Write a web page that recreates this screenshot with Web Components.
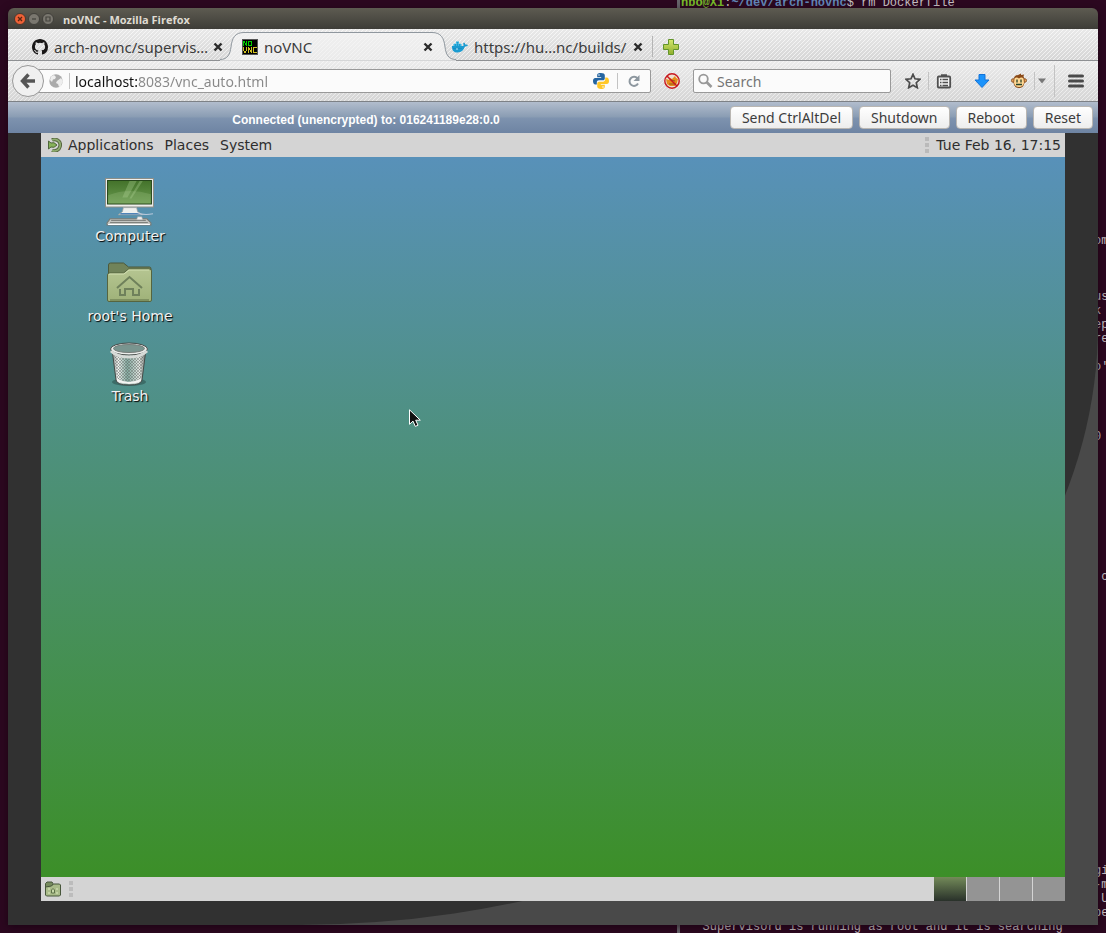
<!DOCTYPE html>
<html lang="en">
<head>
<meta charset="utf-8">
<title>noVNC - Mozilla Firefox</title>
<style>
  html, body { margin: 0; }
  body {
    background: #2c0820;
    font: 14px/20px "Noto Sans", "Open Sans", sans-serif;
    color: #3c3c3c;
  }
</style>
</head>
<body>
<user-desktop>
  <terminal-pane slot="behind"></terminal-pane>
  <browser-window>
    <title-bar slot="title">noVNC - Mozilla Firefox</title-bar>
    <tab-strip slot="tabs">
      <browser-tab icon="github">arch-novnc/supervis…</browser-tab>
      <browser-tab icon="novnc" active>noVNC</browser-tab>
      <browser-tab icon="docker">https://hu…nc/builds/</browser-tab>
    </tab-strip>
    <nav-bar slot="nav"></nav-bar>
    <vnc-page>
      <vnc-bar slot="bar">
        Connected (unencrypted) to: 016241189e28:0.0
        <vnc-button slot="actions">Send CtrlAltDel</vnc-button>
        <vnc-button slot="actions">Shutdown</vnc-button>
        <vnc-button slot="actions">Reboot</vnc-button>
        <vnc-button slot="actions">Reset</vnc-button>
      </vnc-bar>
      <remote-desktop>
        <top-panel slot="top"></top-panel>
        <desktop-icon icon="computer">Computer</desktop-icon>
        <desktop-icon icon="home">root's Home</desktop-icon>
        <desktop-icon icon="trash">Trash</desktop-icon>
        <bottom-panel slot="bottom"></bottom-panel>
      </remote-desktop>
    </vnc-page>
  </browser-window>
</user-desktop>

<script>
const ICONS = {
  github: `<svg width="16" height="16" viewBox="0 0 16 16"><path fill="#191717" d="M8 0C3.58 0 0 3.58 0 8c0 3.54 2.29 6.53 5.47 7.59.4.07.55-.17.55-.38 0-.19-.01-.82-.01-1.49-2.01.37-2.53-.49-2.69-.94-.09-.23-.48-.94-.82-1.13-.28-.15-.68-.52-.01-.53.63-.01 1.08.58 1.23.82.72 1.21 1.87.87 2.33.66.07-.52.28-.87.51-1.07-1.78-.2-3.64-.89-3.64-3.95 0-.87.31-1.59.82-2.15-.08-.2-.36-1.02.08-2.12 0 0 .67-.21 2.2.82a7.6 7.6 0 0 1 4 0c1.53-1.04 2.2-.82 2.2-.82.44 1.1.16 1.92.08 2.12.51.56.82 1.27.82 2.15 0 3.07-1.87 3.75-3.65 3.95.29.25.54.73.54 1.48 0 1.07-.01 1.93-.01 2.2 0 .21.15.46.55.38A8.01 8.01 0 0 0 16 8c0-4.42-3.58-8-8-8z"/></svg>`,
  novnc: `<svg width="16" height="16" viewBox="0 0 16 16" shape-rendering="crispEdges"><rect width="16" height="16" fill="#555"/><rect x="1" y="1" width="14" height="14" fill="#000"/><path fill="none" stroke="#0c0" d="M1.5 7V2M2.500 2v2M3.500 4v2M4.500 7V2M6.500 2v5M6 2.500h3M6 6.500h3M9.500 2v5"/><path fill="none" stroke="#d0c020" d="M1.500 8v4M2.500 12v2M3.500 12v2M4.500 8v4M6.500 14V8M7.500 9v2M8.500 11v2M9.500 14V8M15 8.500h-4M11.500 8v6M15 13.500h-4"/></svg>`,
  docker: `<svg width="16" height="16" viewBox="0 0 16 16"><path fill="#1b9bd0" d="M0 7h11.200c.4-.5.500-1.600-.2-2.300l1-1.200c1 .6 1.400 1.500 1.400 2.200.9-.2 1.800 0 2.600.4-.4 1-1.500 1.600-3 1.500C11.600 11.500 9.300 13.500 5.600 13.500 1.600 13.500-.200 11 0 7z"/><path fill="#35b8e6" d="M1.500 4.800h8V7h-8zM4 2.500h3v2H4z"/><path stroke="#1485b8" stroke-width=".6" d="M3.500 5v2M5.500 3v4M7.500 5v2M1 9.500h9"/><circle cx="5" cy="10" r=".8" fill="#d8f3ff"/></svg>`,
  computer: `<svg width="50" height="48" viewBox="1 1 49 47"><defs><linearGradient id="s" x2="0" y2="1"><stop stop-color="#43722a"/><stop offset="1" stop-color="#6a9b50"/></linearGradient></defs><path d="M1.500 1.500h47v28h-47z" fill="#eeeeec" stroke="#8d8f88"/><path d="M3.500 3.500h43v23h-43z" fill="url(#s)" stroke="#25451a"/><path d="M25 4h7l-9 16h-5zM35 4h3L27 21h-2z" fill="#a9cf90" opacity=".35"/><path d="M4 18q20-8 42-1v9H4z" fill="#b8d8a0" opacity=".2"/><path d="M19 30h13l1 4 5 3H14l4-3z" fill="#eef0ee" stroke="#9c9e9a" stroke-width=".7"/><path d="M16 36h20" stroke="#4e83b8" stroke-width="1.500"/><path d="M33 35q6 3 15 1" fill="none" stroke="#b9c9dc"/><path d="M6 41h36l4 4v2H3v-2z" fill="#c4c6c2" stroke="#777974"/><path d="M7 42.500h34M6 44.500h37" stroke="#80827e"/><path d="M4 46.500h41" stroke="#fff"/><path d="M33 39h4l1 3h-6z" fill="#eee" stroke="#aaa" stroke-width=".5"/></svg>`,
  home: `<svg width="48" height="48" viewBox="1 0 48 48"><defs><linearGradient id="f" x2="0" y2="1"><stop stop-color="#b5c591"/><stop offset="1" stop-color="#9fb279"/></linearGradient></defs><path d="M3.500 20V7q0-2 2-2h13l5 4h21q1.500 0 1.500 2v9z" fill="#718359" stroke="#4c593b"/><path d="M2.500 42V17q0-2 2-2h14l5-4h21q2 0 2 2v29q0 1.500-1.500 1.500H4q-1.500 0-1.500-1.500z" fill="url(#f)" stroke="#56653f"/><path d="M4 17q0-1 1-1h14l5-4h20" fill="none" stroke="#d2dfb2"/><path d="M12 30 24.500 19 37 30M15 31v6h5v-6h8v6h6v-6" fill="none" stroke="#6f815b" stroke-width="2"/><path d="M5 42h39" stroke="#7f9160" stroke-width="2"/></svg>`,
  trash: `<svg width="48" height="48" viewBox="1 0 48 48"><defs><linearGradient id="t"><stop stop-color="#838987"/><stop offset=".18" stop-color="#f1f3f1"/><stop offset=".45" stop-color="#83aaa0"/><stop offset=".8" stop-color="#e2e6e2"/><stop offset="1" stop-color="#707672"/></linearGradient><pattern id="m" width="3" height="3" patternUnits="userSpaceOnUse"><path d="M0 0 3 3M3 0 0 3" stroke="#555d59" stroke-width=".4"/></pattern></defs><ellipse cx="24" cy="44" rx="17" ry="4" opacity=".25"/><path d="M7 11h34l-4 31q-1 5-13 5t-13-5z" fill="url(#t)" stroke="#444a47"/><path d="M9 15h30l-3 26q-12 5-24 0z" fill="url(#m)"/><path d="M12 41q12 6 24 0v2q-12 6-24 0z" fill="#f5f5f3"/><ellipse cx="24" cy="11" rx="18.500" ry="6" fill="#eceeec" stroke="#454a48"/><ellipse cx="24" cy="10.500" rx="15.500" ry="4" fill="#79958f" stroke="#777d7a"/><path d="M6 13q6 6 18 6t18-6" fill="none" stroke="#d6dad7" stroke-width="3"/></svg>`
};

function define(name, html, setup) {
  const template = document.createElement('template');
  template.innerHTML = html;
  customElements.define(name, class extends HTMLElement {
    constructor() {
      super();
      this.attachShadow({ mode: 'open' }).append(template.content.cloneNode(true));
    }
    connectedCallback() {
      if (setup) setup(this, this.shadowRoot);
    }
  });
}
const putIcon = (host, root) => {
  root.querySelector('.icon').innerHTML = ICONS[host.getAttribute('icon')];
};

define('user-desktop', `
<style>
  :host { display: grid; position: relative; min-height: 100vh; box-sizing: border-box; padding: 8px; overflow: hidden; }
</style>
<slot name="behind"></slot><slot></slot>`);

/* Shell session that sits behind the browser; one 14px row per output line. */
define('terminal-pane', `
<style>
  :host { display: block; position: absolute; inset: -4px 0 0 auto; width: 426px; border-left: 3px solid #67656b; overflow: hidden;
    font: 12px/14px "Liberation Mono", monospace; color: #c8c1c5; }
  div { display: grid; grid-template-columns: 1fr 12px; height: 14px; white-space: pre; padding-left: 1px; }
  b { color: #78bd2a; }
  i { color: #6287b8; font-style: normal; font-weight: bold; }
</style>
<section></section>`, (host, root) => {
  const edge = { 17: 'om', 21: 'us', 22: 'k', 23: 'ep', 24: 're', 26: "o'", 31: '0', 41: ' c', 62: 'gi', 63: '-m', 64: ' U', 65: 'pe' };
  let html = '<div><span><b>hbo@Xi</b>:<i>~/dev/arch-novnc</i>$ rm Dockerfile</span></div>';
  for (let row = 1; row < 66; row++) html += `<div><span></span><span>${edge[row] || ''}</span></div>`;
  html += '<div><span>   Supervisord is running as root and it is searching</span></div>';
  root.querySelector('section').innerHTML = html;
});

define('browser-window', `
<style>
  :host { display: flex; flex-direction: column; position: relative; min-width: 0; border-radius: 6px 6px 0 0; box-shadow: 0 2px 8px #12000ca0; }
</style>
<slot name="title"></slot><slot name="tabs"></slot><slot name="nav"></slot><slot></slot>`);

define('title-bar', `
<style>
  :host { display: flex; align-items: center; height: 21px; padding-left: 6px; border-radius: 6px 6px 0 0;
    background: linear-gradient(#5d5b51, #3e3d38); color: #dfdbd2; font: bold 11px/16px "Open Sans", sans-serif; }
  button { width: 12px; height: 12px; padding: 0; margin-right: 2px; border: 0; background: none; display: flex; }
  span { margin-left: 7px; padding-top: 2px; }
</style>
<button aria-label="Close"><svg width="12" height="12"><circle cx="6" cy="6" r="5.500" fill="#ee6136" stroke="#3a302b" stroke-width=".8"/><path d="m4 4 4 4m0-4L4 8" stroke="#582413" stroke-width="1.300"/></svg></button>
<button aria-label="Minimize"><svg width="12" height="12"><circle cx="6" cy="6" r="5.500" fill="#7a776f" stroke="#3a3935" stroke-width=".8"/><path d="M4 6h4" stroke="#45443e" stroke-width="1.300"/></svg></button>
<button aria-label="Maximize"><svg width="12" height="12"><circle cx="6" cy="6" r="5.500" fill="#7a776f" stroke="#3a3935" stroke-width=".8"/><path d="M4 4h4v4H4z" fill="none" stroke="#45443e" stroke-width="1.200"/></svg></button>
<span><slot></slot></span>`);

define('tab-strip', `
<style>
  :host { display: flex; box-sizing: border-box; height: 32px; padding-left: 14px; border-bottom: 1px solid #8e9093;
    background: linear-gradient(135deg, transparent 38%, #ffffffa0 38% 62%, transparent 62%) 0 0/4px 4px, linear-gradient(#e9e9e9, #d6d6d6); }
  i { width: 1px; margin: 7px 10px 3px 0; background: #b5b5b5; }
  button { padding: 0; border: 0; background: none; display: flex; align-items: center; margin-top: 4px; }
</style>
<slot></slot><i></i>
<button aria-label="New tab"><svg width="16" height="16"><defs><linearGradient id="p" x2="0" y2="1"><stop stop-color="#d3e86c"/><stop offset="1" stop-color="#8fae2e"/></linearGradient></defs><path d="M5.500.5h5v5h5v5h-5v5h-5v-5h-5v-5h5z" fill="url(#p)" stroke="#62952a"/></svg></button>`);

define('browser-tab', `
<style>
  :host { display: flex; position: relative; box-sizing: border-box; width: 210px; height: 32px; padding: 4px 9px 0 10px; align-items: center; font-size: 15px; }
  .shape { display: none; position: absolute; left: -12px; bottom: 0; }
  :host([active]) .shape { display: block; }
  .icon { display: flex; width: 16px; margin-right: 6px; position: relative; }
  .label { flex: 1; position: relative; white-space: nowrap; }
  button { position: relative; padding: 0; border: 0; background: none; display: flex; }
</style>
<svg class="shape" width="236" height="31"><path d="M0 29.500C8 29.500 10 24 11 17 12 8 15 2.500 24 2.500h188c9 0 12 5.500 13 14.500 1 7 3 12.500 11 12.500V31H0z" fill="#f4f4f4" fill-opacity=".7"/><path d="M0 29.500C8 29.500 10 24 11 17 12 8 15 2.500 24 2.500h188c9 0 12 5.500 13 14.500 1 7 3 12.500 11 12.500" fill="none" stroke="#8f979e"/></svg>
<span class="icon"></span><span class="label"><slot></slot></span>
<button aria-label="Close tab"><svg width="10" height="10"><path d="m1.500 1.500 7 7m0-7-7 7" stroke="#2b2b2b" stroke-width="2.400"/></svg></button>`, putIcon);

define('nav-bar', `
<style>
  :host { display: flex; align-items: center; box-sizing: border-box; height: 41px; padding: 0 14px 0 4px; border-bottom: 1px solid #7d8186;
    background: linear-gradient(135deg, transparent 38%, #ffffff80 38% 62%, transparent 62%) 0 0/4px 4px, linear-gradient(#ebebeb, #d5d5d5); }
  button { padding: 0; border: 0; background: none; display: flex; flex: none; }
  .back { z-index: 1; box-sizing: border-box; width: 32px; height: 32px; border: 1px solid #999; border-radius: 50%; background: #f0f0f0; align-items: center; justify-content: center; }
  .url, .search { display: flex; align-items: center; box-sizing: border-box; height: 24px; border: 1px solid #999; border-radius: 2px; background: #fbfbfb; }
  .url { flex: 1; min-width: 0; margin-left: -14px; padding: 0 9px 0 17px; }
  .search { width: 198px; padding-left: 4px; margin: 0 14px 0 13px; }
  input { flex: 1; min-width: 0; padding: 2px 0 0; border: 0; outline: 0; background: none; height: 20px; font: inherit; color: #3c3c3c; }
  .search input { margin-left: 4px; }
  input::placeholder { color: #757575; opacity: 1; }
  #address { color: transparent; background: linear-gradient(90deg, #111 63px, #888 63px); -webkit-background-clip: text; background-clip: text; }
  i { flex: none; width: 1px; height: 18px; background: #c3c3c3; }
  .url i { height: 16px; margin: 0 5px; } .url .s2 { margin: 0 9px 0 8px; }
  .search svg { flex: none; }
  .block { margin-left: 13px; }
</style>
<button class="back" aria-label="Back"><svg width="16" height="16"><path d="M8.500 1.500 2.500 8l6 6.500M3 8h12" fill="none" stroke="#555" stroke-width="3.400"/></svg></button>
<div class="url">
  <svg width="16" height="16"><circle cx="8" cy="8" r="6.700" fill="#ababab"/><path d="M3 3.500 6 2l2 2-1 2-2 .500L4 9 2 7zM9 8l4-3 2 3-2 5-2 1-1-3-2-1z" fill="#eee"/></svg>
  <i></i>
  <input id="address" aria-label="Address" value="localhost:8083/vnc_auto.html">
  <button aria-label="Python"><svg width="16" height="16"><path fill="#2464a0" d="M7.900 0C4.500 0 4.200 1.400 4.200 2.300v1.900h4v.7H2.300C.7 4.900 0 6.200 0 8s.8 3.500 2.300 3.500h1.500V9.400c0-1.200 1-2.100 2.100-2.100h4c1 0 1.900-.8 1.900-1.900v-3C11.800.7 10.300 0 7.900 0zM6 1.200a.8.800 0 1 1 0 1.600.8.800 0 0 1 0-1.600z"/><path fill="#ffc727" d="M8.100 16c3.400 0 3.700-1.400 3.700-2.300v-1.900h-4v-.7h5.900C15.300 11.100 16 9.800 16 8s-.8-3.500-2.300-3.500h-1.500v2.100c0 1.200-1 2.100-2.100 2.100h-4c-1 0-1.900.8-1.900 1.900v3C4.200 15.300 5.700 16 8.100 16zm1.900-1.200a.8.800 0 1 1 0-1.600.8.800 0 0 1 0 1.600z"/></svg></button>
  <i class="s2"></i>
  <button aria-label="Reload"><svg width="14" height="14"><path d="M10.500 4.500A4.500 4.500 0 1 0 11 9.500" fill="none" stroke="#8d979f" stroke-width="2"/><path d="M12.500 1v6h-6z" fill="#8d979f"/></svg></button>
</div>
<button class="block" aria-label="Blocker"><svg width="16" height="16"><circle cx="8" cy="8" r="7.200" fill="#eee0cf"/><path d="m2 6 3 1 1-2 2 1 3-3 1 2 2 1-1 4-2 3H6l-3-2z" fill="#e58c1c"/><path d="M5 11h7M7 7l4 1" stroke="#94581b"/><circle cx="8" cy="8" r="7.200" fill="none" stroke="#c9181e" stroke-width="1.400"/><path d="m3 3 10 10" stroke="#c9181e" stroke-width="1.500"/></svg></button>
<label class="search"><svg width="15" height="16"><circle cx="5.500" cy="6" r="4.300" fill="none" stroke="#999" stroke-width="1.800"/><path d="m8.500 9 5 5" stroke="#999" stroke-width="2.600"/></svg><input type="search" placeholder="Search" aria-label="Search"></label>
<button aria-label="Bookmark"><svg width="16" height="16"><path d="m8 1.300 2 4.500 5 .5-3.700 3.400 1 5L8 12.200 3.700 14.700l1-5L1 6.300l5-.5z" fill="none" stroke="#4c4c4c" stroke-width="1.700"/></svg></button>
<i style="margin:0 7px"></i>
<button aria-label="Bookmarks menu"><svg width="16" height="16"><rect x="1.800" y="3.500" width="12.400" height="11" rx="1" fill="#f4f4f4" stroke="#505050" stroke-width="1.800"/><path d="M5 2.500h6" stroke="#505050" stroke-width="2.500"/><path d="M4 6.500h1.500M6.500 6.500H12M4 9.500h1.500M6.500 9.500H12M4 12.500h1.500M6.500 12.500H12" stroke="#505050" stroke-width="1.300"/></svg></button>
<button aria-label="Downloads" style="margin:0 21px 0 22px"><svg width="16" height="16"><path d="M5 1.500h6V7h4l-7 7.500L1 7h4z" fill="#1b93fb" stroke="#1272d8"/></svg></button>
<button aria-label="Monkey"><svg width="16" height="16"><circle cx="2.200" cy="7.500" r="1.800" fill="#e8a35e" stroke="#7c4515" stroke-width=".8"/><circle cx="13.800" cy="7.500" r="1.800" fill="#e8a35e" stroke="#7c4515" stroke-width=".8"/><path d="M2.500 7Q3 2 7 2l3-1.500V2l3-.5-.5 2Q14 6 13.500 10q-1 5-5.500 5t-5.500-5z" fill="#8a4a18"/><path d="M3.500 5.500q2-2 4.500 0 2.500-2 4.500 0L13 10q-1 4-5 4t-5-4z" fill="#ffd894"/><path d="M6 6.500v3M10 6.500v3M5 11.500h6" stroke="#254129" stroke-width="1.300"/></svg></button>
<i style="margin:0 3px 0 7px"></i>
<button aria-label="Monkey menu"><svg width="8" height="6"><path d="M0 .5h8L4 5.500z" fill="#777"/></svg></button>
<i style="margin:0 13px 0 8px;height:32px"></i>
<button aria-label="Menu"><svg width="16" height="14"><path d="M1.500 2h13M1.500 7h13M1.500 12h13" stroke="#4a4a4a" stroke-width="3" stroke-linecap="round"/></svg></button>`);

define('vnc-page', `
<style>
  :host { display: flex; flex: 1; background: #494949; }
  .page { display: flex; flex: 1; flex-direction: column; background: #313131; border-bottom-right-radius: 800px 600px; }
  .stage { display: flex; flex: 1; padding: 0 33px 24px; }
</style>
<div class="page"><slot name="bar"></slot><div class="stage"><slot></slot></div></div>`);

define('vnc-bar', `
<style>
  :host { display: flex; align-items: center; height: 31px; padding-right: 5px; gap: 6px;
    background: linear-gradient(#b2bdcd, #899cb3 49%, #7e93af 51%, #6e84a3); }
  .status { flex: 1; padding-top: 4px; text-align: center; color: #fff; font: bold 12px/18px "Liberation Sans", sans-serif; }
</style>
<span class="status"><slot></slot></span><slot name="actions"></slot>`);

define('vnc-button', `
<style>
  :host { display: block; }
  button { box-sizing: border-box; height: 23px; padding: 0 11px; border: 1px solid #b9b6b2; border-radius: 4px;
    background: linear-gradient(#fff, #ededed); color: #3c3c3c; font: inherit; line-height: 20px; display: block; }
</style>
<button><slot></slot></button>`);

define('remote-desktop', `
<style>
  :host { display: flex; flex: 1; flex-direction: column; position: relative; font: 14px/20px "DejaVu Sans", sans-serif; }
  .wall { flex: 1; display: flex; flex-direction: column; gap: 12px; padding: 21px 41px; background: linear-gradient(#5891b9, #4b906f 50%, #3c8f28); }
  .cursor { position: absolute; left: 368px; top: 276px; }
</style>
<slot name="top"></slot><div class="wall"><slot></slot></div><slot name="bottom"></slot>
<svg class="cursor" width="12" height="19"><path d="M.5.8v14.500l3.500-3.200 2.300 5.300 2.700-1.200-2.300-5h4.600z" fill="#111" stroke="#fff"/></svg>`);

define('desktop-icon', `
<style>
  :host { display: flex; flex-direction: column; align-items: center; width: 96px; color: #f2f2f2; text-shadow: 1px 1px 1px #000; white-space: nowrap; }
  .icon { display: flex; height: 48px; }
</style>
<span class="icon"></span><span><slot></slot></span>`, putIcon);

define('top-panel', `
<style>
  :host { display: flex; align-items: center; height: 24px; padding: 0 4px 0 7px; background: #d4d4d4; color: #2e2e2e; }
  nav { display: flex; flex: 1; gap: 11px; margin-left: 6px; }
  button { padding: 0; border: 0; background: none; font: inherit; color: inherit; }
  .grip { margin-right: 7px; }
</style>
<svg width="14" height="14"><path d="M4 2q3-1.500 6 .5 3 2 2 6t-5.500 4.500Q5 13 4 12.500" fill="none" stroke="#56653f" stroke-width="3.600"/><path d="M4 2q3-1.500 6 .5 3 2 2 6t-5.500 4.500Q5 13 4 12.500" fill="none" stroke="#8fae70" stroke-width="1.600"/><path d="M.5 3v8l2.500-2q3 1.500 6-2-3-3.500-6-2z" fill="#87b35a" stroke="#4f663b"/></svg>
<nav><button>Applications</button><button>Places</button><button>System</button></nav>
<svg class="grip" width="4" height="16"><path d="M0 0h4v4H0zM0 6h4v4H0zM0 12h4v4H0z" fill="#bababa"/></svg>
<time>Tue Feb 16, 17:15</time>`);

define('bottom-panel', `
<style>
  :host { display: flex; align-items: center; height: 24px; padding-left: 4px; gap: 8px; background: #d4d4d4; }
  button { padding: 0; border: 0; background: none; display: flex; }
  .pager { display: grid; grid-template-columns: repeat(4, 32px); gap: 1px; align-self: stretch; margin-left: auto; }
  .pager button { background: #949494; }
  .pager .on { background: linear-gradient(#738a59, #29312a); }
</style>
<button aria-label="Show files"><svg width="16" height="16"><path d="M.5 13V2.500L2 1h5l1 1.500L7 5z" fill="#768b5d" stroke="#47563b"/><path d="M.5 14V6l6-1 2-2h6l1 1v10l-1 1h-13z" fill="#a9bb89" stroke="#47563b"/><path d="M6.500 12V9L8 7.500 9.500 9v3z" fill="#c8d8a9" stroke="#5c7048"/><path d="M3 8h2M3 12h2M11 8h2M11 12h2" stroke="#dbe9bf"/></svg></button>
<svg width="4" height="16"><path d="M0 0h4v4H0zM0 6h4v4H0zM0 12h4v4H0z" fill="#bcbcbc"/></svg>
<div class="pager"><button class="on" aria-label="Workspace 1"></button><button aria-label="Workspace 2"></button><button aria-label="Workspace 3"></button><button aria-label="Workspace 4"></button></div>`);
</script>
</body>
</html>
